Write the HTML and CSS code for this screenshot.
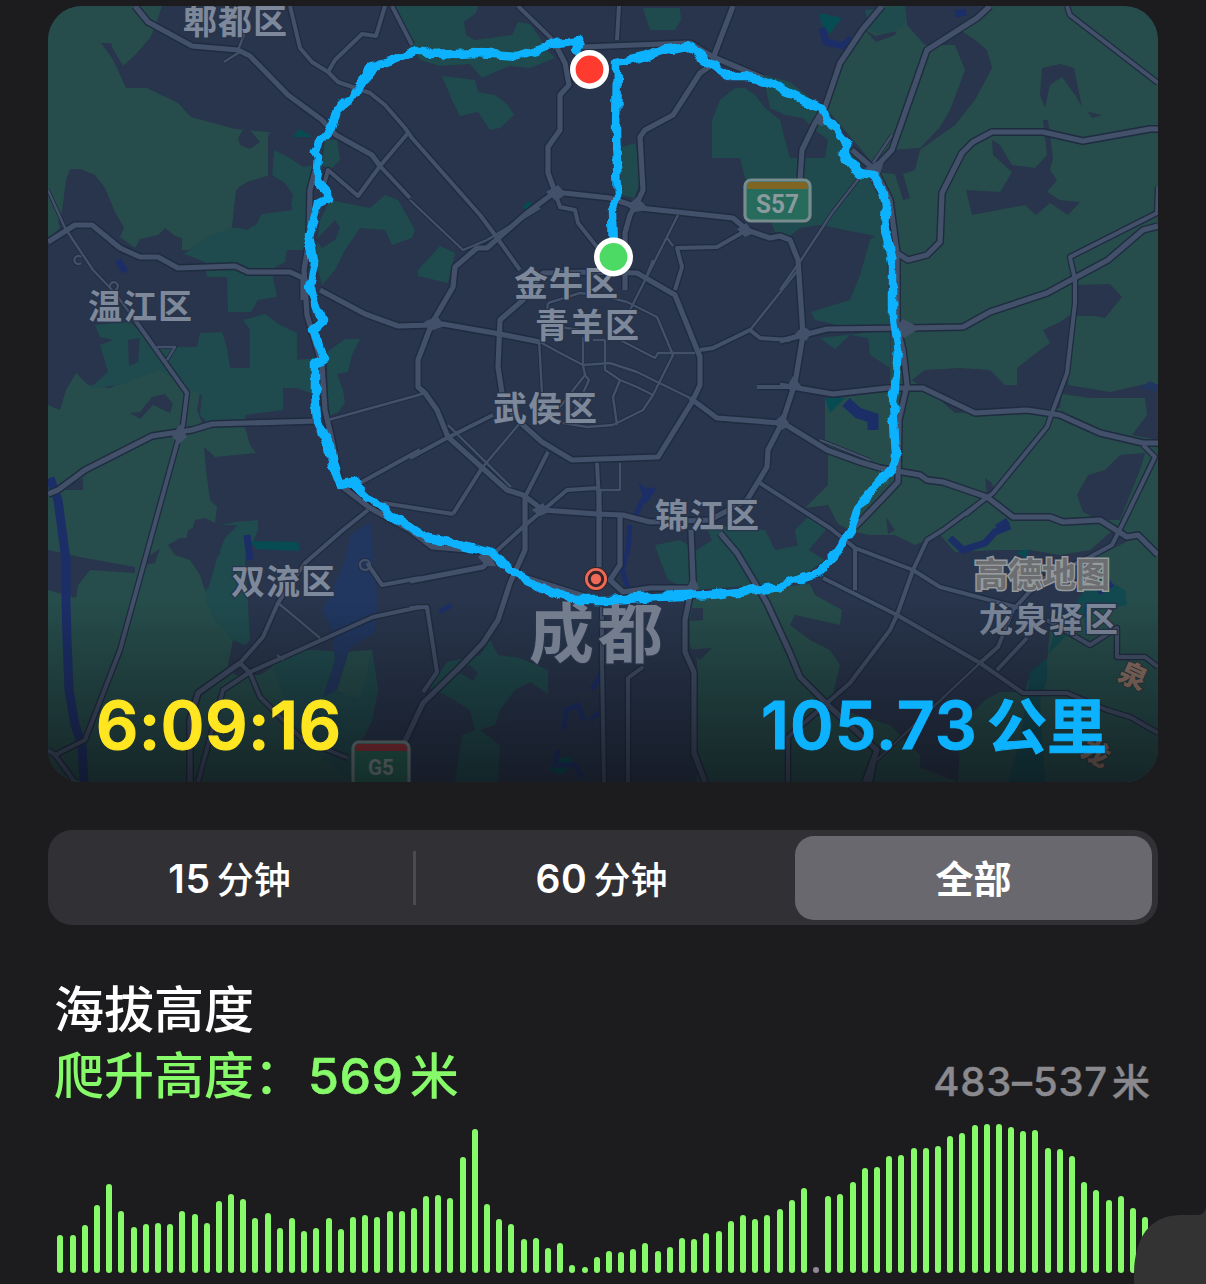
FILE: index.html
```html
<!DOCTYPE html>
<html lang="zh-CN">
<head>
<meta charset="utf-8">
<title>海拔高度</title>
<link rel="stylesheet" href="styles.css">
</head>
<body>
<main class="screen">
  <section class="map">
    <svg class="map-canvas" viewBox="48 6 1110 776" width="1110" height="776">
      <defs>
        <linearGradient id="fade" x1="0" y1="0" x2="0" y2="1">
          <stop offset="0" stop-color="#0b0d12" stop-opacity="0"/>
          <stop offset="1" stop-color="#0b0d12" stop-opacity=".62"/>
        </linearGradient>
        <filter id="jitter" filterUnits="userSpaceOnUse" x="280" y="20" width="650" height="600">
          <feTurbulence type="fractalNoise" baseFrequency=".07" numOctaves="2" seed="4" result="noise"/>
          <feDisplacementMap in="SourceGraphic" in2="noise" scale="9" xChannelSelector="R" yChannelSelector="G"/>
        </filter>
        <g id="wide">
          <path d="M135 6L148 22L192 46L238 50L250 56L288 95L322 120L336 135L372 155L380 166"/>
          <path d="M48 242L75 225L92 225L120 248L140 257L158 257L178 268L235 266L248 272L290 272L303 278"/>
          <path d="M318 160L310 190L309 240L304 270L307 315L322 365L325 410L332 440L340 485L370 508L410 530L432 547L480 551"/>
          <path d="M48 494L58 490L85 470L152 436L192 430L212 424L318 421"/>
          <path d="M320 290L365 314L398 326L432 325"/>
          <path d="M432 323L418 360L418 387L425 393L437 410L448 437L507 490L523 495L543 510L597 514L623 515L650 522L710 520L747 500L767 467L768 450L782 423L795 383L803 335L798 260L790 240L780 236L770 238L747 230L733 218L640 208L610 198L555 192L527 213L487 248L477 248L455 267L453 287Z"/>
          <path d="M500 320L498 367L502 393L504 405L523 425L542 442L572 460L658 457L692 402L700 385L700 357L675 295L637 273L590 272L543 273L523 300Z"/>
          <path d="M437 323L500 334L540 342M690 398L717 418L780 423"/>
          <path d="M553 40L565 63L569 85L560 95L560 130L548 147L548 173L555 192"/>
          <path d="M582 47L690 43L713 57L763 78"/>
          <path d="M733 6L715 53L712 65L700 73L673 115L645 130L640 137L643 190L637 203L630 215L625 233L625 290"/>
          <path d="M882 6L862 30L840 63L825 107L815 123L802 150L800 180"/>
          <path d="M990 6L977 18L927 50L892 150L873 170"/>
          <path d="M852 150L875 170L890 200L897 253L908 260L927 255L940 242L942 193L962 153L973 142L992 132L1043 132L1083 141L1150 129L1158 129"/>
          <path d="M1158 226L1143 230L1108 260L1047 293L990 312L963 327L907 328L827 329L780 341"/>
          <path d="M897 253L897 325L903 350L907 385L899 420L898 482L883 498L855 527"/>
          <path d="M780 385L833 394L887 388L923 388L975 413L1027 410L1060 415L1100 433L1143 443L1158 443"/>
          <path d="M783 423L827 450L860 462L880 468L920 475L927 480L943 482L987 497L1013 517L1050 517L1063 522L1100 520L1127 537L1138 535L1158 555"/>
          <path d="M525 497L525 550L510 583L498 620L483 643L460 667L423 703L407 737L390 770"/>
          <path d="M599 490L599 567M620 515L620 565L610 580L623 592L650 588L690 588M691 530L693 580L685 620L685 652L694 672L694 753L705 782"/>
          <path d="M720 533L737 553L767 603L790 653L800 677L830 707L877 750L865 782"/>
          <path d="M527 578L587 597M303 278L303 300M240 663L198 693L190 720L190 782"/>
          <path d="M410 581L483 567L493 557"/>
        </g>
        <g id="medium">
          <path d="M290 6L300 48L312 62L328 72L338 82L370 93L385 105L405 128L412 138L480 215L495 235L520 270"/>
          <path d="M385 6L376 36L362 34L335 60L328 72M392 6L412 45M380 166L408 133M380 166L358 196L328 170L324 185M380 166L410 198"/>
          <path d="M135 320L187 393L183 425L178 440L120 650L85 740L55 755L75 782M48 750L58 757"/>
          <path d="M518 6L553 40M619 6L617 40M555 192L560 207L575 210L578 223L597 247"/>
          <path d="M747 230L717 247L677 248L682 267L675 290M700 350L713 348L750 330L760 338L790 340"/>
          <path d="M410 458L443 440L493 415M453 514L482 468M525 497L548 452M523 527L567 490L597 488M597 463L600 520M757 387L795 387"/>
          <path d="M360 483L420 450M383 503L453 514M368 510L343 530L305 563L278 603L263 637L240 663L250 673L260 697L303 740L348 758"/>
          <path d="M367 563L382 585L420 578M420 607L373 617L250 672L223 690L198 782"/>
          <path d="M523 527L490 557M602 607L602 663L604 782M643 667L628 678L628 782M410 608L427 607L437 672L423 692"/>
          <path d="M1067 6L1070 15L1158 83M1158 187L1157 213L1070 257L1075 280L1075 303L1067 373L1053 410L1047 427L993 493L943 530L927 540L913 570L897 615L890 630L850 683L788 737L788 782"/>
          <path d="M1143 445L1155 457L1123 523L1112 545L1090 557L1040 580L1013 610L998 647L980 663"/>
          <path d="M760 483L830 528L855 548L913 570L940 587L1020 608M855 548L855 590M823 578L897 615L980 663L1023 693L1067 693L1107 710L1130 717L1158 733"/>
          <path d="M997 670L1027 638M1047 620L1090 645L1117 628L1117 657L1145 657L1158 667M877 750L870 782M987 497L965 515"/>
        </g>
        <g id="thin">
          <path d="M410 200L463 250L487 240L540 208M48 190L65 228L93 270L115 293L135 320M157 347L175 347L167 360"/>
          <path d="M328 420L415 396L425 393M482 468L520 423M448 425L511 487"/>
          <path d="M548 303L580 293L600 295L627 302L657 317L673 355L653 395L643 410L613 425L587 427L563 423M542 393L539 340M548 303L545 325L580 330"/>
          <path d="M540 342L560 353L583 365L610 363L637 372L690 398M583 337L583 365L585 375L560 407M585 375L589 380L573 415M605 340L605 370L620 380L637 387L653 395M593 340L605 340"/>
          <path d="M620 380L613 397L617 425M620 340L655 358L658 353L695 353M678 215L630 310M667 238L673 246M750 330L798 270M653 260L645 280"/>
          <path d="M620 463L620 490L597 490M278 603L295 617L320 638M860 177L832 213L803 257L780 290M820 440L870 460M892 135L873 163M980 663L930 710L877 760M238 50L250 20M224 62L235 55L240 52"/>
          <circle cx="365" cy="565" r="5"/>
          <path d="M81 257A4 4 0 1 0 81 263M110 287A4 4 0 1 1 115 290M277 655L283 660"/>
        </g>
        <path id="track" d="M613 257L612 210L618 198L616 133L617 63L640 58L663 50L688 46L710 62L732 77L747 77L770 83L790 93L808 102L820 107L830 123L848 145L842 153L860 173L873 175L883 192L886 207L884 227L889 247L893 267L893 320L898 350L895 387L893 403L896 457L893 467L880 482L858 508L851 530L833 557L818 573L797 580L780 586L757 590L710 595L657 597L610 600L577 600L550 592L527 582L520 573L507 570L493 552L453 543L427 538L410 527L377 505L353 482L340 485L333 467L330 447L317 420L315 393L315 363L325 359L313 330L322 322L310 287L315 263L309 237L318 203L328 198L328 192L317 180L319 157L315 150L323 137L332 127L337 110L360 87L373 67L393 60L417 50L423 50L430 55L477 53L517 56L557 43L580 40L577 50L589 69"/>
      </defs>
      <rect x="48" y="6" width="1110" height="776" fill="#28354c"/>
      <g fill="#264d4b">
        <path d="M48 6H162L156 24L150 38L135 55L123 66L113 49L111 43H101L112 58L118 70L126 88L147 88L178 103L191 117L235 129L270 132L270 175L247 182L238 188L236 210L232 228L188 250L182 250V238L175 236L165 228L158 235L140 239L135 248L120 237L124 228L115 212L105 188L95 175L80 169H70L66 180L62 212L58 222L60 228L48 239Z"/>
        <path d="M48 405L60 410L66 390L76 373L88 385L110 388L160 365L187 388L200 393L197 410L204 428L210 425L245 427L250 445L256 453L215 457L204 447L206 470L210 500L217 507L215 523L205 518L195 520L190 538L180 538L168 545L175 555L190 560L200 575L205 590L215 610L225 630L233 640L228 665L235 675H260L275 665L278 655L310 650L345 652L372 650L375 670L378 690L372 720L365 735L355 750L350 782H48Z"/>
        <path d="M882 6H1158V782H697L697 660L690 645V625L688 600L820 582L850 530L805 508L828 485V455L825 440V400L890 390L893 200L870 160L825 107L840 63L865 25Z"/>
      </g>
      <g fill="#1f4b4e">
        <path d="M274 150L290 158L303 167L315 165L312 205L298 210L290 213L293 195L285 183L272 175Z"/>
        <path d="M262 213L312 205L306 250L287 250L285 262L270 270L273 277L277 297L258 300L251 312L228 312L227 277H207L205 262L184 254L210 235L232 228H248L256 225Z"/>
        <path d="M325 140H337L340 160L330 170L322 165ZM330 200L370 208L385 195L398 200L415 230L412 238L392 245L385 230L360 228L345 250L335 270L322 285L315 260L320 220Z"/>
        <path d="M95 325L130 322L157 347H175L197 347L200 333L222 332L227 348L230 368H250V330L243 320L265 314L280 325L297 333V360L315 358L316 395L297 388H283L283 410L245 415V427L210 425L200 415L202 395L187 388L160 370L120 385L90 388L108 372L100 345L113 340L100 337Z"/>
        <path d="M327 352L345 339H360L352 355L348 372L337 374L343 390L345 403L338 412L328 417ZM418 270L440 246L455 253L448 283L418 276Z"/>
        <path d="M220 525L235 522L258 520L258 530L245 560L248 605L250 640L245 645L232 640L215 620L205 600L208 575L207 558L220 555Z"/>
        <path d="M272 665L278 655L310 650L345 652L335 690L360 700L372 650L375 670L378 690L372 720L365 735L355 750L350 782L300 740Z"/>
        <path d="M395 6H478L476 13L464 22L466 35L475 40L512 35L518 22L530 24L540 38L545 48L555 58L530 68L510 66L495 72L482 78L470 64L440 66L420 60L410 45Z"/>
        <path d="M442 76L475 80L478 92L495 95L508 105L514 115L500 128L490 130L478 112L460 116L452 100ZM643 8H680L681 20L675 30L650 30ZM622 147L636 143L640 180L635 198L620 195Z"/>
        <path d="M735 88H745L755 95L765 108L780 120L785 140L790 158H825L828 140L815 130L803 118L785 115L770 108L763 75L790 82L825 110L870 180L885 210L890 325L860 330L815 320L811 312L850 300L860 275L870 240L875 236L820 225L800 228L785 240L775 232L765 205L745 178L740 158H712V120L720 100Z"/>
        <path d="M820 338L835 349L850 335L868 338L870 355L890 368V330ZM655 545L680 540L697 550L712 540L705 525L765 530L775 550L800 545L825 560L790 585L760 585L690 590L668 580L660 560Z"/>
        <path d="M447 662L480 655L490 640L498 655L520 658L548 670V694L530 682L515 690L500 710L495 725L480 730L500 745L498 782H455L462 735L475 730L470 710L445 695L430 688ZM865 10L905 6V25L885 35L870 30ZM795 530L813 512L830 525L800 560Z"/>
      </g>
      <g fill="#28354c">
        <path d="M238 138L243 130H250L260 142L250 149L240 145ZM236 190L262 179L285 190L293 210L262 214L248 230L232 226ZM268 132L274 145L272 177H268Z"/>
        <path d="M128 340L140 338L138 362L129 366ZM130 413L140 412L152 397L165 394L173 404L170 413L153 405L140 419ZM316 240L335 220L340 228L335 240L322 248Z"/>
        <path d="M48 550L80 557L135 567V573L90 570L78 585L76 598L48 590ZM55 490L83 478V490ZM188 530L200 525H238L225 538L218 555L208 590L198 570L185 550ZM145 558L160 549L155 563L143 565Z"/>
        <path d="M905 6H985L960 30L975 40L987 50L992 68L975 100L955 125L920 150L915 170L903 174L910 198L903 200L895 174L873 172L892 150L920 148L940 127L950 110L965 70L955 45L925 45L907 25Z"/>
        <path d="M864 29L875 36L897 31L895 35L876 42ZM1042 68L1060 64L1074 68L1082 107L1075 95L1062 77L1050 85L1045 108L1040 95ZM1088 112L1102 115L1092 118Z"/>
        <path d="M966 190L1000 192L1012 172L993 155L992 140L1000 145L1012 165L1035 168L1047 155L1043 120H1048L1053 158L1050 170L1057 180L1047 192L1060 200L1080 202L1068 215L1050 203L1036 215L1025 205L972 215Z"/>
        <path d="M912 380L925 370L960 368L990 370L1005 385H1017V368L1040 350L1050 343L1043 330L1060 322L1070 315L1068 385L1110 392L1145 384H1158V440L1132 435L1147 415L1145 398L1090 398L1062 394L1060 408L955 413L940 400ZM1078 285L1110 284L1122 297L1105 318L1095 316H1075Z"/>
        <path d="M1088 475L1105 470L1120 455L1145 453L1140 470L1120 520L1100 520L1083 512L1077 495ZM985 478L992 483L995 495L987 496ZM805 508L828 505L840 528L815 522Z"/>
        <path d="M823 565L845 530L870 535L895 535L915 545L940 535L955 552L1000 550L1030 550L1060 555L1090 550L1113 530L1130 540L1090 560L1085 590L1075 610L1050 630L1047 660L1028 680L1025 692L1000 692L985 700L970 715L960 740L958 782L920 768V755L890 725L830 707L840 665L830 650L810 640L790 625L795 615L840 625L842 610L815 595L808 580Z"/>
        <path d="M692 608H703V620L690 621ZM687 650L712 648L700 660ZM455 670L470 665L478 673L473 681Z"/>
        <path d="M886 517L895 530L888 534Z"/>
      </g>
      <g fill="#064c52">
        <path d="M292 137L300 129L313 137ZM819 13L842 18L830 34L822 25ZM523 206L530 201L535 210L525 211ZM250 541L298 542L300 551L256 549ZM825 398L845 398L830 413ZM1016 552L1030 549L1025 558Z"/>
        <path d="M550 770L555 758L572 757L570 768L560 775Z"/>
      </g>
      <path fill="#12484f" d="M1085 590L1110 582L1125 590L1127 605L1100 610L1080 620L1062 640L1047 655V680L1040 700L1045 782H1008L1020 740L1028 690L1030 672L1047 658L1055 630Z"/>
      <g fill="none" stroke="#1c2e68" stroke-width="7">
        <path d="M50 478L58 500L62 530L66 560L66 600L67 640L69 690L75 725L82 745L84 782" stroke-width="9"/>
        <path d="M822 28L826 42L843 46L851 38M955 14L966 12M118 260L125 272M247 535L250 560M950 538L963 550L985 543L995 532L1010 526M1098 592L1112 583M997 528L1008 521"/>
        <path d="M846 402L858 413L873 418V430" stroke-width="11"/>
        <path d="M650 488L640 505L634 520M630 525L628 550L622 570L628 588L636 595M440 612L451 605M600 675L592 690M564 730L566 710L578 705L583 720M590 720L600 712M558 750L555 765L575 765L582 778M630 640L618 640" stroke-width="5"/>
        <path d="M640 485L648 492L656 488L646 502Z" stroke-width="2" fill="#1c2e68"/>
      </g>
      <path fill="#213760" d="M365 525L372 523L373 560L378 600L375 632L350 648L337 690L323 697L335 660L332 630L322 610L330 595L345 560L350 535ZM1140 388L1150 381L1158 385V392Z"/>
      <g class="road-edge">
        <use href="#thin" stroke-width="4"/><use href="#medium" stroke-width="6.5"/><use href="#wide" stroke-width="8"/>
      </g>
      <g class="road">
        <use href="#thin" stroke-width="2.4"/><use href="#medium" stroke-width="4"/><use href="#wide" stroke-width="5.2"/>
        <path stroke="none" fill="#435069" d="M424 322L437 316L445 326L430 331ZM794 335L803 326L812 332L806 341ZM546 192L558 185L566 194L556 201ZM627 206L637 197L650 210L634 212ZM737 229L746 223L754 233L745 237ZM773 423L783 414L790 425L782 430ZM895 328L903 319L920 328L904 338ZM172 436L180 424L187 437L179 444ZM813 123L824 104L832 120L823 126ZM865 168L880 160L885 158L878 180ZM487 548L478 557L486 566L496 566ZM532 510L543 503L549 512L540 516ZM686 590L693 575L699 588L692 594ZM787 387L793 376L802 387L792 392Z"/>
      </g>
      <g class="shield">
        <rect x="745" y="180" width="65" height="41" rx="6" fill="#276b5d"/>
        <path d="M747 189V186Q747 182 751 182H804Q808 182 808 186V189Z" fill="#806524"/>
        <rect x="745" y="180" width="65" height="41" rx="6" class="shield-line"/>
        <text x="756" y="213" font-size="25" textLength="43" lengthAdjust="spacingAndGlyphs">S57</text>
      </g>
      <g class="shield">
        <rect x="353" y="742" width="56" height="46" rx="6" fill="#246652"/>
        <path d="M355 751V748Q355 744 359 744H403Q407 744 407 748V751Z" fill="#9b2f33"/>
        <rect x="353" y="742" width="56" height="46" rx="6" class="shield-line"/>
        <text x="368" y="775" font-size="22" textLength="26" lengthAdjust="spacingAndGlyphs">G5</text>
      </g>
      <g class="place">
        <text x="183" y="34">郫都区</text>
        <text x="88" y="319">温江区</text>
        <text x="514" y="296">金牛区</text>
        <text x="535" y="338">青羊区</text>
        <text x="493" y="421">武侯区</text>
        <text x="655" y="528">锦江区</text>
        <text x="231" y="594">双流区</text>
        <text x="979" y="632">龙泉驿区</text>
      </g>
      <text x="974" y="587" class="watermark">高德地图</text>
      <text transform="translate(1133 676) rotate(24)" class="hill" x="-14" y="10">泉</text>
      <text transform="translate(1096 753) rotate(28)" class="hill" x="-14" y="10">龙</text>
      <rect x="48" y="600" width="1110" height="182" fill="url(#fade)"/>
      <g class="place"><text x="529" y="657" class="city">成都</text></g>
      <circle cx="596" cy="579" r="12" fill="#35242a"/>
      <circle cx="596" cy="579" r="9.6" fill="#35242a" stroke="#ef6a56" stroke-width="2.8"/>
      <circle cx="596" cy="579" r="5.2" fill="#ef6a56"/>
      <g filter="url(#jitter)"><use href="#track" class="track"/></g>
      <circle cx="589.5" cy="69.5" r="16.7" class="pin" fill="#ff3b30"/>
      <circle cx="613.5" cy="257" r="16.7" class="pin" fill="#4cd964"/>
    </svg>
    <div class="totals">
      <span class="duration">6:09:16</span>
      <span class="distance">105.73<span class="unit">公里</span></span>
    </div>
  </section>

  <nav class="segments">
    <span class="segment">15<i>分钟</i></span>
    <span class="segment">60<i>分钟</i></span>
    <span class="segment selected">全部</span>
  </nav>

  <section class="elevation">
    <h2>海拔高度</h2>
    <div class="summary">
      <p class="climb">爬升高度：<span>569</span><i>米</i></p>
      <p class="range">483–537<i>米</i></p>
    </div>
    <div class="bars" id="bars"></div>
  </section>
  <svg class="corner" viewBox="0 0 72 77" width="72" height="77"><path d="M0 77V66C1 32 14 9 46 8H64Q70 8 72 1V77Z" fill="#323332"/></svg>
</main>
<script src="bars.js"></script>
</body>
</html>
```
FILE: styles.css
```css
* { box-sizing: border-box; }
body {
  margin: 0;
  background: #1c1c1e;
  font-family: Inter, "Noto Sans CJK SC", sans-serif;
  color: #fff;
}
i { font-style: normal; }
.screen {
  position: relative;
  width: 1206px;
  height: 1284px;
  padding: 6px 48px 0;
  overflow: hidden;
}
.map {
  display: grid;
  height: 776px;
  border-radius: 34px;
  overflow: hidden;
}
.map-canvas, .totals { grid-area: 1 / 1; }
.road-edge, .road { fill: none; stroke-linejoin: round; }
.road-edge { stroke: #1f2b40; }
.road { stroke: #435069; }
.shield-line { fill: none; stroke: #788b8d; stroke-width: 3.2px; }
.shield text {
  fill: #8a9a9d;
  font-family: Roboto, sans-serif;
  font-weight: 700;
}
.place {
  fill: #7d889b;
  stroke: #28344a;
  stroke-width: 2.5px;
  paint-order: stroke;
  font-family: "Noto Sans CJK SC", sans-serif;
  font-size: 34px;
  font-weight: 700;
  letter-spacing: 1px;
}
.city { fill: #747d8e; font-size: 65px; letter-spacing: 4px; }
.watermark {
  fill: #6b6d70;
  stroke: #969b9d;
  stroke-width: 3px;
  paint-order: stroke;
  font: 700 34px "Noto Sans CJK SC", sans-serif;
}
.hill {
  fill: #927264;
  stroke: #263b3d;
  stroke-width: 2px;
  paint-order: stroke;
  font: 900 28px "Noto Sans CJK SC", sans-serif;
}
.track { fill: none; stroke: #0db2ff; stroke-width: 8.5px; stroke-linejoin: round; }
.pin { stroke: #fff; stroke-width: 5.6px; }
.totals {
  display: flex;
  justify-content: space-between;
  align-items: flex-end;
  padding: 0 51px 17px 48px;
  font-size: 66px;
  font-weight: 600;
  line-height: 80px;
  z-index: 1;
}
.duration {
  color: #ffe620;
  letter-spacing: .8px;
  -webkit-text-stroke: 1.2px #ffe620;
  paint-order: stroke;
  stroke-linejoin: round;
}
.distance {
  color: #0db2ff;
  letter-spacing: 1.2px;
  -webkit-text-stroke: 1px #0db2ff;
}
.unit {
  margin-left: 9px;
  font-family: "Noto Sans CJK SC", sans-serif;
  font-weight: 700;
  font-size: 60px;
  letter-spacing: 0;
  line-height: 1;
}
.segments {
  display: grid;
  grid-template-columns: 368px 1fr 357px;
  height: 95px;
  margin-top: 48px;
  padding: 6px;
  padding-left: 0;
  border-radius: 24px;
  background: #313034;
}
.segment {
  display: flex;
  align-items: center;
  justify-content: center;
  gap: 6px;
  padding-right: 8px;
  font-size: 39px;
  font-weight: 600;
  letter-spacing: .7px;
}
.segment i { font-size: 37px; font-weight: 500; letter-spacing: 0; }
.segment:first-child {
  height: 54px;
  margin: 15px 0 0;
  padding-right: 2px;
  border-right: 3px solid #4b4a4f;
}
.segment.selected {
  height: 84px;
  padding: 0 0 3px;
  border-radius: 19px;
  background: #69686f;
  font-size: 38px;
  letter-spacing: 0;
}
.elevation { padding: 51px 8px 0 6px; }
h2, p { margin: 0; }
h2 {
  height: 66px;
  font-size: 50px;
  font-weight: 500;
  line-height: 68px;
}
.summary {
  display: flex;
  justify-content: space-between;
  height: 66px;
  line-height: 68px;
}
.climb { color: #86fa68; font-size: 50px; font-weight: 500; white-space: nowrap; }
.climb span { margin-left: 4px; letter-spacing: .6px; -webkit-text-stroke: .6px #86fa68; }
.climb i { margin-left: 6px; font-size: 49px; }
.range { padding-top: 6px; color: #8a898e; font-size: 40px; font-weight: 500; letter-spacing: .8px; -webkit-text-stroke: .4px #8a898e; }
.range i { margin-left: 4px; font-size: 38px; letter-spacing: 0; }
.bars {
  display: flex;
  align-items: flex-end;
  gap: 6.2px;
  height: 165px;
  margin-left: 3.45px;
}
.bar { flex: none; width: 6px; border-radius: 3px; background: #86fa68; }
.bar.empty { background: #918896; }
.corner { position: absolute; right: 0; bottom: 0; }
```
FILE: bars.js
```js
// Bar heights in pixels, one per time slot; 0 marks a slot without data.
const heights = [
  38, 38, 48, 68, 89, 62, 46, 49, 50, 49, 62, 59, 50, 72, 79, 74, 55, 60, 45, 55,
  42, 45, 55, 44, 56, 58, 56, 62, 62, 65, 77, 78, 75, 116, 144, 69, 54, 49, 34, 35,
  25, 30, 8, 6, 16, 22, 21, 24, 30, 22, 26, 35, 34, 40, 42, 52, 58, 54, 58, 64,
  73, 85, 0, 77, 79, 91, 105, 106, 117, 118, 125, 125, 127, 137, 140, 148, 149, 149, 146, 142,
  143, 125, 124, 117, 91, 83, 73, 77, 65, 56
];
const bars = document.getElementById("bars");
for (const h of heights) {
  const bar = document.createElement("span");
  bar.className = h ? "bar" : "bar empty";
  bar.style.height = (h || 6) + "px";
  bars.append(bar);
}
```
